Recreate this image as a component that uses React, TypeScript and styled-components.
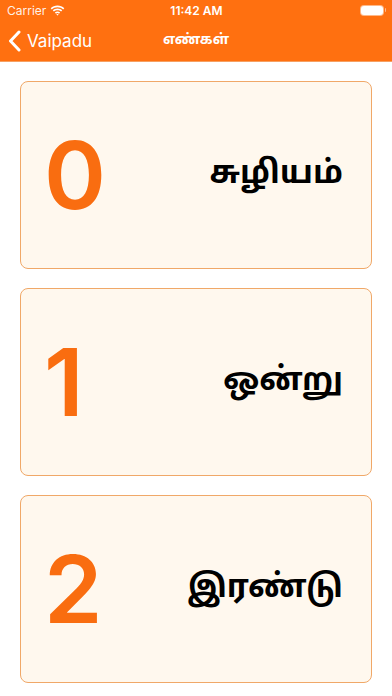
import React from "react";
import styled, { createGlobalStyle } from "styled-components";

const numbers = [
  { digit: "0", word: "சுழியம்" },
  { digit: "1", word: "ஒன்று" },
  { digit: "2", word: "இரண்டு" },
];

const GlobalStyle = createGlobalStyle`
  html, body {
    margin: 0;
    padding: 0;
    background: #ffffff;
    font-family: Inter, "Liberation Sans", Arial, sans-serif;
  }
`;

export default function App() {
  return (
    <>
      <GlobalStyle />
      <Screen>
        <TopBar>
          <StatusBar>
            <Carrier>
              Carrier
              <svg width="15" height="11" viewBox="0 0 15 11">
                <path d="M7.5 2.2c2.2 0 4.2.8 5.7 2.2l1.1-1.1C12.5 1.6 10.1.6 7.5.6S2.5 1.6.7 3.3l1.1 1.1C3.3 3 5.3 2.2 7.5 2.2z" fill="#fff" />
                <path d="M7.5 5.2c1.4 0 2.6.5 3.6 1.4l1.1-1.1C11 4.3 9.3 3.6 7.5 3.6S4 4.3 2.8 5.5l1.1 1.1c1-.9 2.2-1.4 3.6-1.4z" fill="#fff" />
                <path d="M7.5 8.1c.6 0 1.1.2 1.5.6l1.1-1.1C9.4 6.9 8.5 6.5 7.5 6.5s-1.9.4-2.6 1.1L6 8.7c.4-.4.9-.6 1.5-.6zM7.5 10.6l1.2-1.2c-.3-.3-.7-.5-1.2-.5s-.9.2-1.2.5z" fill="#fff" />
              </svg>
            </Carrier>
            <Clock>11:42 AM</Clock>
            <Battery>
              <BatteryBody />
              <BatteryCap />
            </Battery>
          </StatusBar>
          <NavBar>
            <BackButton>
              <svg width="13" height="22" viewBox="0 0 13 22">
                <path d="M11 2 2.5 11 11 20" fill="none" stroke="#fff" strokeWidth="3" strokeLinecap="round" strokeLinejoin="round" />
              </svg>
              Vaipadu
            </BackButton>
            <Title>எண்கள்</Title>
          </NavBar>
        </TopBar>
        <List>
          {numbers.map((n) => (
            <Card key={n.digit}>
              <Digit>{n.digit}</Digit>
              <Word>{n.word}</Word>
            </Card>
          ))}
        </List>
      </Screen>
    </>
  );
}

const Screen = styled.div`
  width: 392px;
  height: 696px;
  overflow: hidden;
  background: #ffffff;
`;

const TopBar = styled.header`
  background: #ff7010;
  color: #ffffff;
`;

const StatusBar = styled.div`
  height: 20px;
  display: grid;
  grid-template-columns: 1fr auto 1fr;
  align-items: center;
  padding: 0 6px 0 7px;
  font-size: 12px;
`;

const Carrier = styled.div`
  display: flex;
  align-items: center;
  gap: 4px;
  font-size: 12px;
  color: rgba(255, 255, 255, 0.92);
`;

const Clock = styled.div`
  font-weight: 600;
  font-size: 12px;
`;

const Battery = styled.div`
  justify-self: end;
  display: flex;
  align-items: center;
`;

const BatteryBody = styled.div`
  width: 22px;
  height: 9px;
  border-radius: 3px;
  background: #ffffff;
  box-shadow: 0 0 0 1px rgba(255, 255, 255, 0.5);
`;

const BatteryCap = styled.div`
  width: 1.5px;
  height: 4px;
  margin-left: 2px;
  border-radius: 0 1px 1px 0;
  background: rgba(255, 255, 255, 0.5);
`;

const NavBar = styled.nav`
  height: 41px;
  position: relative;
  display: flex;
  align-items: center;
  justify-content: center;
  border-bottom: 1px solid #f6a062;
`;

const BackButton = styled.div`
  position: absolute;
  left: 8px;
  top: 0;
  bottom: 0;
  display: flex;
  align-items: center;
  gap: 6px;
  font-size: 17px;
`;

const Title = styled.div`
  font-family: "Noto Sans Tamil", "Lohit Tamil", "Noto Sans", sans-serif;
  font-weight: 700;
  font-size: 14px;
`;

const List = styled.main`
  display: flex;
  flex-direction: column;
  gap: 19px;
  padding: 19px 20px 0 20px;
`;

const Card = styled.section`
  height: 188px;
  box-sizing: border-box;
  display: flex;
  align-items: center;
  justify-content: space-between;
  padding: 0 28px 0 23px;
  background: #fff8ee;
  border: 1px solid #f0a868;
  border-radius: 8px;
`;

const Digit = styled.div`
  font-family: Inter, "Liberation Sans", Arial, sans-serif;
  font-weight: 600;
  font-size: 94px;
  line-height: 1;
  color: #f96d10;
`;

const Word = styled.div`
  font-family: "Noto Sans Tamil", "Lohit Tamil", "Noto Sans", sans-serif;
  font-weight: 700;
  font-size: 32px;
  color: #000000;
`;
